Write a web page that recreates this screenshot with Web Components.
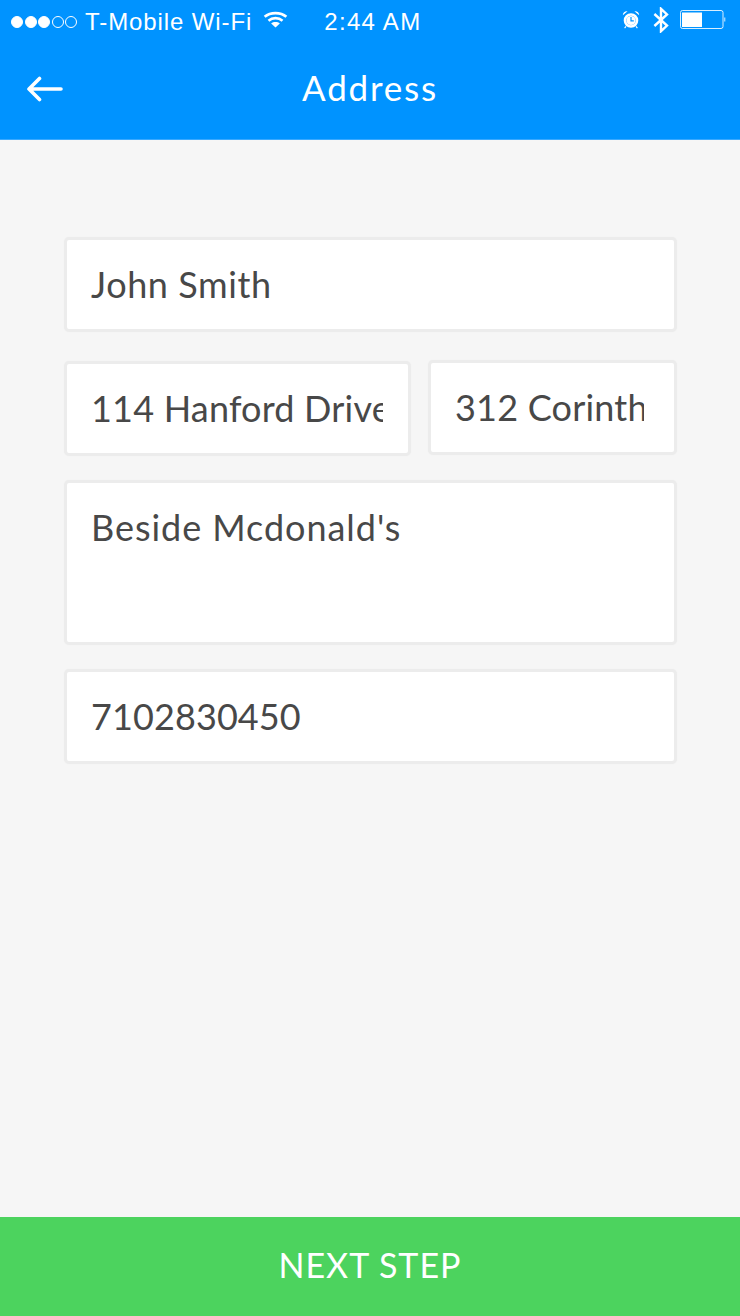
<!DOCTYPE html>
<html>
<head>
<meta charset="utf-8">
<title>Address</title>
<style>
html,body{margin:0;padding:0;height:100%;background:#f6f6f6}
body{font-family:"Lato","Noto Sans",sans-serif}
</style>
</head>
<body>
<address-screen>
  <app-bar slot="top" title="Address"></app-bar>
  <address-field style="letter-spacing:.6px">John Smith</address-field>
  <field-row>
    <address-field slot="left" style="letter-spacing:.2px;padding-right:25px">114 Hanford Drive</address-field>
    <address-field slot="right" style="letter-spacing:.2px">312 Corinth</address-field>
  </field-row>
  <address-field tall style="letter-spacing:.95px">Beside Mcdonald's</address-field>
  <address-field style="letter-spacing:.1px">7102830450</address-field>
  <next-button slot="bottom">NEXT STEP</next-button>
</address-screen>

<script>
class StatusBar extends HTMLElement{
    constructor(){
        super();
        this.attachShadow({mode: 'open'})
    }
    connectedCallback(){
        this.shadowRoot.innerHTML=`
        <style>
        :host{display:flex;height:40px;align-items:center;color:#fff;font-family:"Liberation Sans",Arial,sans-serif;font-size:24px}
        .left{display:flex;align-items:center;margin:3px 0 0 11px}
        .dots{display:flex;gap:1.5px;margin-right:8px}
        .dot{width:12px;height:12px;border-radius:50%;border:1px solid #fff;box-sizing:border-box}
        .dot.on{background:#fff}
        .carrier{letter-spacing:.9px;white-space:nowrap}
        .wifi{margin:-5px 0 0 11px}
        .time{margin-left:36px;letter-spacing:1.3px;white-space:nowrap}
        .right{display:flex;align-items:center;margin-left:auto;margin-right:14px}
        .right svg{display:block}
        .bt{margin-left:13px}
        .battery{margin-left:11px}
        </style>
        <div class="left">
          <div class="dots">
            <span class="dot on"></span><span class="dot on"></span><span class="dot on"></span><span class="dot"></span><span class="dot"></span>
          </div>
          <span class="carrier">T-Mobile Wi-Fi</span>
          <svg class="wifi" width="25" height="17" viewBox="0 0 26 18" fill="none" stroke="#fff" stroke-width="2.8">
            <path d="M1.5 6.2C7.6 .9 18.4 .9 24.5 6.2"/>
            <path d="M5.6 10.2C9.7 6.6 16.3 6.6 20.4 10.2"/>
            <path d="M13 17.6L8.4 13.2C11 11.2 15 11.2 17.6 13.2Z" fill="#fff" stroke="none"/>
          </svg>
          <span class="time">2:44 AM</span>
        </div>
        <div class="right">
          <svg width="18" height="20" viewBox="0 0 18 20" fill="none" stroke="#fff">
            <circle cx="9" cy="10.5" r="6" stroke-width="2.6"/>
            <circle cx="9" cy="10.5" r="4.6" fill="#fff" stroke="none"/>
            <path d="M9 7V10.8H11.8" stroke-width="1.2" stroke="#0093ff"/>
            <path d="M.8 5.2C1 2.4 3 .8 5.6 1.2Z M17.2 5.2C17 2.4 15 .8 12.4 1.2Z" fill="#fff" stroke="none"/>
            <path d="M4 16.4L2.6 18.2M14 16.4L15.4 18.2" stroke-width="1.1"/>
          </svg>
          <svg class="bt" width="16" height="26" viewBox="0 0 16 26" fill="none" stroke="#fff" stroke-width="2.4">
            <path d="M1.4 7L14 18.6L8 24.2V1.8L14 7.4L1.4 19"/>
          </svg>
          <svg class="battery" width="46" height="20" viewBox="0 0 46 20">
            <rect x=".5" y=".5" width="42.5" height="18" rx="2" fill="none" stroke="#fff" stroke-opacity=".85"/>
            <rect x="2" y="2.5" width="20" height="14.5" fill="#fff"/>
            <path d="M44 7.5h1.4v4H44z" fill="#fff" fill-opacity=".6"/>
          </svg>
        </div>
        `
    }
}
customElements.define('status-bar', StatusBar)

class AppBar extends HTMLElement{
    constructor(){
        super();
        this.attachShadow({mode: 'open'})
    }
    connectedCallback(){
        this.shadowRoot.innerHTML=`
        <style>
        :host{display:block;background:#0093ff;border-bottom:1px solid #3aa9ff;color:#fff}
        .nav{display:grid;grid-template-columns:1fr auto 1fr;align-items:center;height:99px}
        .back{display:block;margin:-2px 0 0 27px}
        h1{margin:-6px 0 0;font:400 35px "Lato","Noto Sans",sans-serif;letter-spacing:1.8px}
        </style>
        <status-bar></status-bar>
        <div class="nav">
          <svg class="back" width="36" height="26" viewBox="0 0 36 26" fill="none" stroke="#fff" stroke-width="3.6" stroke-linecap="round" stroke-linejoin="round">
            <path d="M34 13H2.5M12.5 2.5L2 13L12.5 23.5"/>
          </svg>
          <h1>${this.getAttribute('title')}</h1>
          <span></span>
        </div>
        `
    }
}
customElements.define('app-bar', AppBar)

class AddressField extends HTMLElement{
    constructor(){
        super();
        this.attachShadow({mode: 'open'})
    }
    connectedCallback(){
        this.shadowRoot.innerHTML=`
        <style>
        :host{display:block;box-sizing:border-box;height:95px;background:#fff;border:3px solid #ececec;border-radius:5px;box-shadow:0 0 1px #eee;padding:0 30px 0 24px;color:#484848;font-size:36px;line-height:89px}
        :host([tall]){height:165px}
        .value{white-space:nowrap;overflow:hidden}
        </style>
        <div class="value"><slot></slot></div>
        `
    }
}
customElements.define('address-field', AddressField)

class FieldRow extends HTMLElement{
    constructor(){
        super();
        this.attachShadow({mode: 'open'})
    }
    connectedCallback(){
        this.shadowRoot.innerHTML=`
        <style>
        :host{display:grid;grid-template-columns:347px 249px;column-gap:17px;margin-top:5px}
        ::slotted([slot=right]){margin-top:-1px}
        </style>
        <slot name="left"></slot>
        <slot name="right"></slot>
        `
    }
}
customElements.define('field-row', FieldRow)

class NextButton extends HTMLElement{
    constructor(){
        super();
        this.attachShadow({mode: 'open'})
    }
    connectedCallback(){
        this.shadowRoot.innerHTML=`
        <style>
        :host{display:flex;align-items:center;justify-content:center;box-sizing:border-box;height:99px;padding-bottom:4px;background:#4cd35e;color:#fff;font-size:34px;letter-spacing:1px;cursor:pointer}
        </style>
        <slot></slot>
        `
    }
}
customElements.define('next-button', NextButton)

class AddressScreen extends HTMLElement{
    constructor(){
        super();
        this.attachShadow({mode: 'open'})
    }
    connectedCallback(){
        this.shadowRoot.innerHTML=`
        <style>
        :host{display:flex;flex-direction:column;height:1316px;width:740px;background:#f6f6f6}
        .form{flex:1;display:flex;flex-direction:column;gap:24px;padding:97px 63px 0 64px}
        </style>
        <slot name="top"></slot>
        <div class="form"><slot></slot></div>
        <slot name="bottom"></slot>
        `
    }
}
customElements.define('address-screen', AddressScreen)
</script>
</body>
</html>
